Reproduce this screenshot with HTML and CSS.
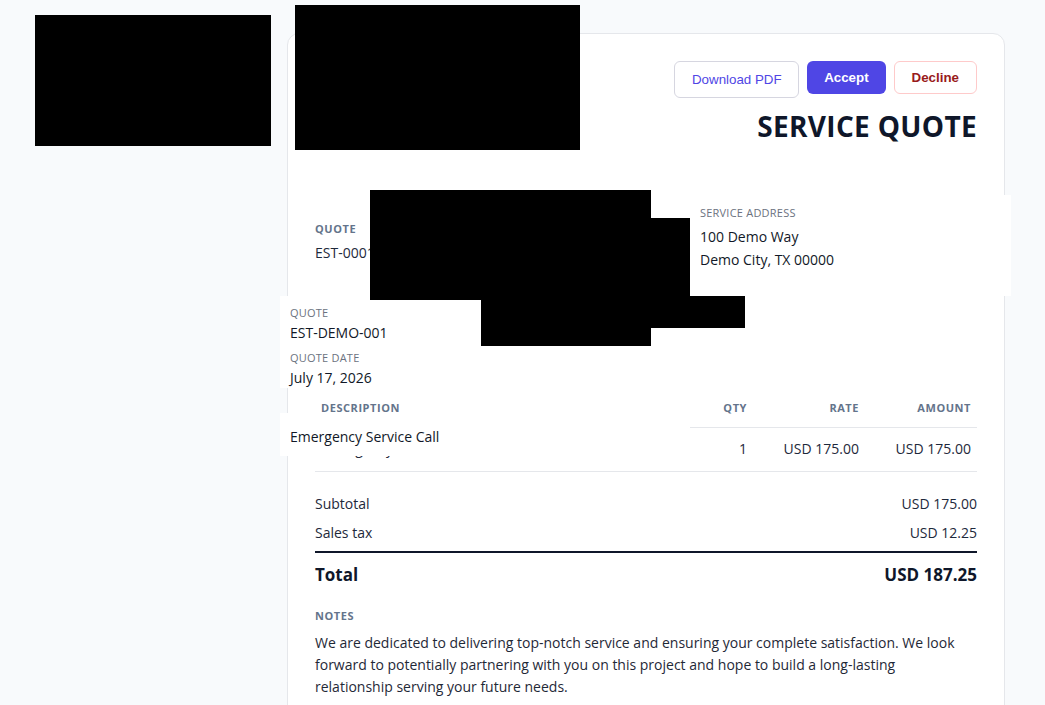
FILE: index.html
```html
<!DOCTYPE html>
<html lang="en">
<head>
    <meta charset="UTF-8">
    <meta name="viewport" content="width=device-width, initial-scale=1.0">
    <title>Service Quote</title>
    <link rel="stylesheet" href="styles.css">
</head>
<body>
    <div class="page">
        <aside class="sidebar">
            <div class="brand-block"></div>
        </aside>

        <main class="quote-card">
            <div class="card-header">
                <div class="company"></div>
                <div class="header-right">
                    <div class="actions">
                        <button class="btn btn-outline">Download PDF</button>
                        <button class="btn btn-primary">Accept</button>
                        <button class="btn btn-danger">Decline</button>
                    </div>
                    <h1 class="doc-title">SERVICE QUOTE</h1>
                </div>
            </div>

            <div class="meta">
                <div class="meta-item">
                    <div class="label">Quote</div>
                    <div class="value">EST-0001</div>
                </div>
            </div>

            <table class="items">
                <thead>
                    <tr>
                        <th class="col-desc">Description</th>
                        <th class="col-qty">Qty</th>
                        <th class="col-rate">Rate</th>
                        <th class="col-amount">Amount</th>
                    </tr>
                </thead>
                <tbody>
                    <tr>
                        <td class="col-desc">Emergency Service Call</td>
                        <td class="col-qty">1</td>
                        <td class="col-rate">USD 175.00</td>
                        <td class="col-amount">USD 175.00</td>
                    </tr>
                </tbody>
            </table>

            <div class="totals">
                <div class="totals-row">
                    <span>Subtotal</span>
                    <span>USD 175.00</span>
                </div>
                <div class="totals-row">
                    <span>Sales tax</span>
                    <span>USD 12.25</span>
                </div>
                <div class="totals-row grand">
                    <span>Total</span>
                    <span>USD 187.25</span>
                </div>
            </div>

            <div class="notes">
                <div class="label">Notes</div>
                <p>We are dedicated to delivering top-notch service and ensuring your complete satisfaction. We look forward to potentially partnering with you on this project and hope to build a long-lasting relationship serving your future needs.</p>
            </div>
        </main>
    </div>

    <!-- summary popovers -->
    <div class="popover popover-address">
        <div class="pop-label">Service Address</div>
        <div class="pop-value">100 Demo Way</div>
        <div class="pop-value">Demo City, TX 00000</div>
    </div>
    <div class="popover popover-meta">
        <div class="pop-label">Quote</div>
        <div class="pop-value">EST-DEMO-001</div>
        <div class="pop-label">Quote date</div>
        <div class="pop-value">July 17, 2026</div>
    </div>
    <div class="popover popover-item">
        <div class="pop-value">Emergency Service Call</div>
    </div>

    <!-- masked areas -->
    <div class="mask mask-logo"></div>
    <div class="mask mask-party"></div>
    <div class="mask mask-party-side"></div>
    <div class="mask mask-contact"></div>
    <div class="mask mask-contact-low"></div>
</body>
</html>
```

FILE: styles.css
```css
body {
    margin: 0;
    background: #f8fafc;
    font-family: 'Open Sans', 'Noto Sans', sans-serif;
    color: #1e293b;
    font-size: 14px;
}
.page {
    display: flex;
    gap: 16px;
    padding: 15px 40px 0 35px;
}
.sidebar {
    width: 236px;
    flex-shrink: 0;
}
.brand-block {
    height: 131px;
    background: #000;
}
.quote-card {
    width: 662px;
    margin-top: 18px;
    padding: 27px 27px 40px;
    background: #fff;
    border: 1px solid #e5e7eb;
    border-radius: 12px;
}
.card-header {
    display: flex;
    justify-content: space-between;
}
.header-right {
    display: flex;
    flex-direction: column;
    align-items: flex-end;
}
.actions {
    display: flex;
    gap: 8px;
    align-items: flex-start;
}
.btn {
    font-family: 'Liberation Sans', Arial, sans-serif;
    font-size: 13.33px;
    line-height: 15px;
    padding: 8px 17px;
    border-radius: 6px;
    border: 1px solid transparent;
    cursor: pointer;
}
.btn-outline {
    padding: 10px 16.5px;
    background: #fff;
    border-color: #d6d6e0;
    color: #4f46e5;
}
.btn-primary {
    padding: 8px 16px;
    background: #4f46e5;
    color: #fff;
    font-weight: bold;
}
.btn-danger {
    background: #fff;
    border-color: #fecaca;
    color: #991b1b;
    font-weight: bold;
}
.doc-title {
    margin: 10px 0 0;
    font-size: 28px;
    line-height: 36px;
    font-weight: 700;
    letter-spacing: 0.012em;
    color: #0f172a;
}
.label {
    font-size: 11px;
    line-height: 16px;
    font-weight: 700;
    letter-spacing: 0.05em;
    text-transform: uppercase;
    color: #64748b;
}
.meta {
    margin-top: 77px;
    display: flex;
}
.meta .value {
    margin-top: 5px;
    font-size: 14px;
    line-height: 22px;
}
.items {
    width: 100%;
    margin-top: 124px;
    border-collapse: collapse;
}
.items th {
    padding: 10px 6px 9px;
    font-size: 11px;
    line-height: 20px;
    font-weight: 700;
    letter-spacing: 0.05em;
    text-transform: uppercase;
    color: #64748b;
    border-bottom: 1px solid #e5e7eb;
}
.items td {
    padding: 11px 6px 12px;
    font-size: 14px;
    line-height: 20px;
    border-bottom: 1px solid #e5e7eb;
}
.col-desc {
    text-align: left;
}
.col-qty,
.col-rate,
.col-amount {
    text-align: right;
}
.col-qty {
    width: 68px;
}
.col-rate {
    width: 100px;
}
.col-amount {
    width: 100px;
}
.totals {
    margin-top: 17px;
}
.totals-row {
    display: flex;
    justify-content: space-between;
    font-size: 14px;
    line-height: 22px;
    padding: 3.5px 0;
}
.totals-row.grand {
    margin-top: 4px;
    padding: 11px 0 0;
    border-top: 2px solid #0f172a;
    font-size: 17px;
    font-weight: 700;
    color: #0f172a;
}
.notes {
    margin-top: 22px;
}
.notes p {
    max-width: 650px;
    margin: 8px 0 0;
    font-size: 14px;
    line-height: 22px;
    color: #1f2937;
}

/* popovers that sit over the card */
.popover {
    position: absolute;
    background: #fff;
    box-sizing: border-box;
}
.pop-label {
    font-size: 11px;
    line-height: 16px;
    letter-spacing: 0.02em;
    text-transform: uppercase;
    color: #6b7280;
}
.pop-value {
    font-size: 14px;
    line-height: 20px;
    color: #111827;
}
.popover-address {
    left: 690px;
    top: 195px;
    width: 321px;
    height: 101px;
    padding: 10px 10px;
}
.popover-address .pop-value {
    line-height: 23px;
}
.popover-address .pop-label {
    margin-bottom: 4px;
}
.popover-meta {
    left: 280px;
    top: 296px;
    width: 201px;
    height: 92px;
    padding: 9px 10px;
}
.popover-meta .pop-value {
    margin-top: 2px;
}
.popover-meta .pop-value + .pop-label {
    margin-top: 7px;
}
.popover-item {
    left: 280px;
    top: 413px;
    width: 410px;
    height: 43px;
    padding: 14px 10px 0;
}

/* blacked-out regions */
.mask {
    position: absolute;
    background: #000;
}
.mask-logo {
    left: 295px;
    top: 5px;
    width: 285px;
    height: 145px;
}
.mask-party {
    left: 370px;
    top: 190px;
    width: 281px;
    height: 110px;
}
.mask-party-side {
    left: 651px;
    top: 218px;
    width: 39px;
    height: 82px;
}
.mask-contact {
    left: 481px;
    top: 296px;
    width: 264px;
    height: 32px;
}
.mask-contact-low {
    left: 481px;
    top: 296px;
    width: 170px;
    height: 50px;
}
```
